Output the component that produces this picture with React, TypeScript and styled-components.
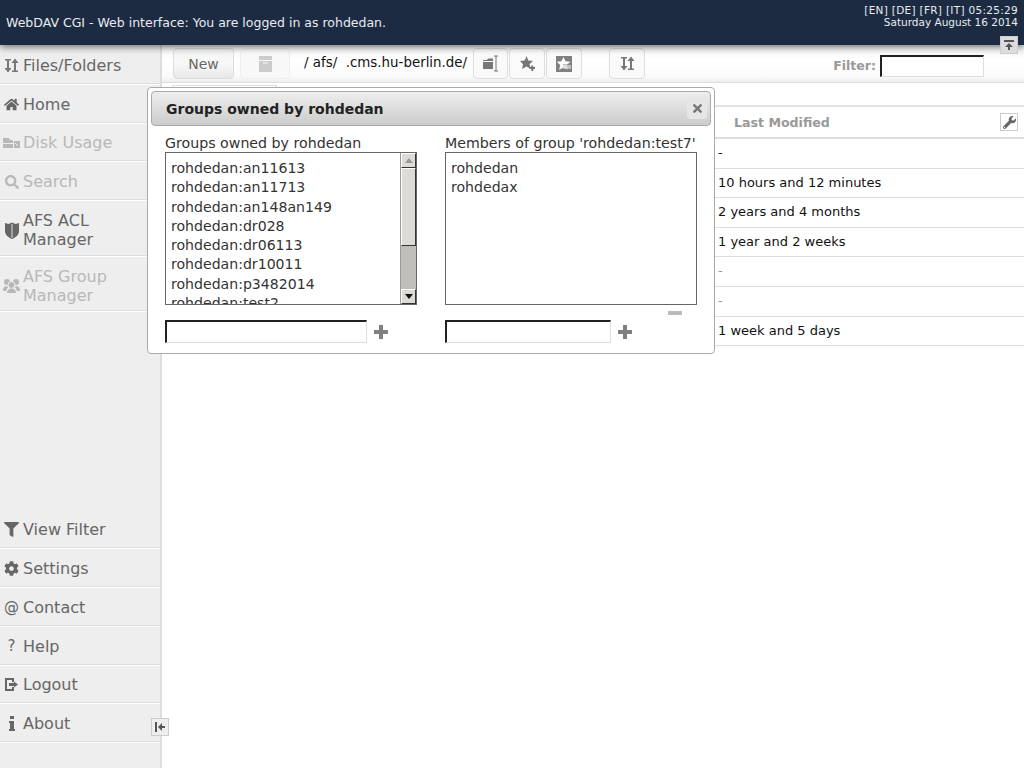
import styled, { createGlobalStyle } from "styled-components";
import { ReactNode } from "react";
import { FaCog, FaFilter, FaHome, FaSearch, FaTimes, FaWrench } from "react-icons/fa";

const GlobalStyle = createGlobalStyle`
  html, body {
    margin: 0;
    height: 100%;
    overflow: hidden;
    background: #fff;
    font-family: "DejaVu Sans", Verdana, sans-serif;
  }
`;

const Page = styled.div`
  position: relative;
  width: 1024px;
  height: 768px;
  display: flex;
  flex-direction: column;
  overflow: hidden;
`;

const TopBar = styled.header`
  position: relative;
  z-index: 2;
  height: 45px;
  flex: none;
  display: flex;
  justify-content: space-between;
  padding: 4px 6px 0;
  box-sizing: border-box;
  background: #1c2b42;
  box-shadow: 0 2px 7px rgba(0, 0, 0, 0.55);
  color: #e8ecf0;
`;

const Title = styled.div`
  font-size: 12.5px;
  line-height: 16px;
  padding-top: 11px;
`;

const Clock = styled.div`
  font-size: 10.5px;
  line-height: 12px;
  text-align: right;
`;

const ClockLine = styled.div<{ $wide?: boolean }>`
  letter-spacing: ${(p) => (p.$wide ? "0.3px" : "0")};
`;

const PinButton = styled.button`
  position: absolute;
  right: 6px;
  top: 36px;
  width: 18px;
  height: 18px;
  padding: 0;
  display: flex;
  align-items: center;
  justify-content: center;
  border: 1px solid #ccc;
  background: #ddd;
`;

const Body = styled.div`
  flex: 1;
  min-height: 0;
  display: flex;
`;

const Sidebar = styled.nav`
  width: 162px;
  flex: none;
  display: flex;
  flex-direction: column;
  justify-content: space-between;
  padding-bottom: 26px;
  box-sizing: border-box;
  background: #eee;
  border-right: 2px solid #ddd;
`;

const NavGroup = styled.div`
  display: flex;
  flex-direction: column;
`;

const NavItem = styled.div<{ $disabled?: boolean; $tall?: boolean }>`
  height: ${(p) => (p.$tall ? "55.5px" : "38.75px")};
  box-sizing: border-box;
  padding-top: ${(p) => (p.$tall ? "6px" : "3px")};
  display: flex;
  align-items: center;
  border-bottom: 1px solid #ddd;
  box-shadow: 0 1px 0 #fff;
  color: ${(p) => (p.$disabled ? "#b8b8b8" : "#666")};
  font-size: 16px;
  line-height: 19px;
`;

const NavIcon = styled.span<{ $disabled?: boolean }>`
  width: 23px;
  flex: none;
  display: flex;
  justify-content: center;
  color: ${(p) => (p.$disabled ? "#b8b8b8" : "#666")};
`;

const GlyphIcon = styled.span`
  font-size: 15px;
  line-height: 16px;
`;

const Main = styled.main`
  flex: 1;
  min-width: 0;
  display: flex;
  flex-direction: column;
`;

const Toolbar = styled.div`
  height: 38px;
  flex: none;
  box-sizing: border-box;
  display: flex;
  align-items: flex-start;
  padding: 3px 0 0 10px;
  background: linear-gradient(#f4f4f4, #fff 40%, #fafafa 85%, #eee);
  border-bottom: 1px solid #ddd;
`;

const ToolButton = styled.button<{ $w: number; $disabled?: boolean; $ml?: number }>`
  width: ${(p) => p.$w}px;
  height: 31px;
  margin-left: ${(p) => p.$ml ?? 1}px;
  padding: 0;
  flex: none;
  display: flex;
  align-items: center;
  justify-content: center;
  border: 1px solid ${(p) => (p.$disabled ? "#eee" : "#ddd")};
  border-radius: 4px;
  background: ${(p) => (p.$disabled ? "#f8f8f8" : "linear-gradient(#f4f4f4, #f8f8f8 50%, #e8e8e8)")};
  color: #666;
  font: 14px "DejaVu Sans", sans-serif;
`;

const IconButton = styled(ToolButton)`
  background: #fafafa;
`;

const Crumbs = styled.div`
  width: 168px;
  margin-left: 14px;
  flex: none;
  color: #111;
  font-size: 13.4px;
  line-height: 30px;
  white-space: pre;
`;

const FilterLabel = styled.label`
  margin-left: auto;
  color: #999;
  font-size: 12.5px;
  font-weight: bold;
  line-height: 36px;
`;

const TextField = styled.input<{ $w: number }>`
  width: ${(p) => p.$w}px;
  box-sizing: border-box;
  background: #fff;
  border-style: solid;
  border-width: 2px 1px 1px 2px;
  border-color: #222 #ddd #ddd #222;
  outline: none;
`;

const FilterField = styled(TextField)`
  height: 22px;
  margin: 7px 40px 0 4px;
`;

const PageInfo = styled.div`
  width: 105px;
  height: 20px;
  margin: 2px 0 0 10px;
  box-sizing: border-box;
  border: 1px solid #ddd;
  border-bottom: 0;
`;

const Listing = styled.div`
  border-top: 2px solid #e4e4e4;
`;

const HeaderRow = styled.div`
  height: 30px;
  display: flex;
  align-items: center;
  justify-content: space-between;
  padding: 0 6px 0 572px;
  border-bottom: 2px solid #ddd;
  color: #999;
  font-size: 12.6px;
  font-weight: bold;
`;

const SettingsButton = styled.button`
  width: 18px;
  height: 18px;
  padding: 0;
  display: flex;
  align-items: center;
  justify-content: center;
  border: 1px solid #ccc;
  background: #fff;
  color: #666;
`;

const Row = styled.div<{ $muted?: boolean }>`
  height: 29.6px;
  box-sizing: border-box;
  padding-left: 556px;
  border-bottom: 1px solid #ddd;
  color: ${(p) => (p.$muted ? "#999" : "#111")};
  font-size: 13px;
  line-height: 28px;
`;

const CollapseButton = styled.button`
  position: absolute;
  left: 151px;
  top: 718px;
  width: 18px;
  height: 18px;
  padding: 0;
  display: flex;
  align-items: center;
  justify-content: center;
  border: 1px solid #ccc;
  background: #eee;
`;

const Dialog = styled.section`
  position: absolute;
  z-index: 3;
  left: 147px;
  top: 87px;
  width: 568px;
  height: 267px;
  box-sizing: border-box;
  padding: 3px;
  background: #fff;
  border: 1px solid #aaa;
  border-radius: 4px;
`;

const DialogTitle = styled.div`
  height: 35px;
  box-sizing: border-box;
  display: flex;
  align-items: center;
  justify-content: space-between;
  padding: 0 3px 0 14px;
  background: linear-gradient(#eee, #ccc);
  border: 1px solid #aaa;
  border-radius: 4px;
  color: #222;
  font-size: 14px;
  font-weight: bold;
`;

const CloseButton = styled.button`
  width: 20px;
  height: 20px;
  padding: 0;
  display: flex;
  align-items: center;
  justify-content: center;
  border: 0;
  border-radius: 3px;
  background: #e6e6e6;
  color: #777;
`;

const Columns = styled.div`
  display: flex;
  gap: 28px;
  padding: 7px 0 0 14px;
`;

const Column = styled.div`
  width: 252px;
`;

const ColumnLabel = styled.div`
  color: #333;
  font-size: 14.2px;
  line-height: 19px;
  padding-top: 1px;
  height: 18px;
  white-space: nowrap;
`;

const ListBox = styled.div`
  height: 153px;
  box-sizing: border-box;
  display: flex;
  overflow: hidden;
  border: 1px solid #666;
`;

const ListItems = styled.ul`
  flex: 1;
  margin: 0;
  padding: 6px 5px 0;
  list-style: none;
  color: #333;
  font-size: 14.1px;
  line-height: 19.25px;
`;

const ScrollTrack = styled.div`
  width: 15px;
  flex: none;
  display: flex;
  flex-direction: column;
  background: #bfbeb8;
  border-left: 1px solid #999;
`;

const ScrollButton = styled.div`
  height: 15px;
  flex: none;
  display: flex;
  align-items: center;
  justify-content: center;
  box-sizing: border-box;
  background: #dcdbd6;
  border: 1px solid;
  border-color: #fff #333 #333 #fff;
`;

const ScrollThumb = styled.div`
  height: 78px;
  flex: none;
  box-sizing: border-box;
  background: #dcdbd6;
  border: 1px solid;
  border-color: #fff #333 #333 #fff;
`;

const ScrollSpacer = styled.div`
  flex: 1;
`;

const Arrow = styled.span<{ $up?: boolean }>`
  width: 0;
  height: 0;
  border-left: 4px solid transparent;
  border-right: 4px solid transparent;
  ${(p) => (p.$up ? "border-bottom: 5px solid #999;" : "border-top: 5px solid #111;")}
`;

const RemoveRow = styled.div`
  height: 15px;
  box-sizing: border-box;
  padding: 6px 15px 0 0;
  display: flex;
  justify-content: flex-end;
  align-items: flex-start;
`;

const AddRow = styled.div`
  display: flex;
  align-items: center;
  gap: 7px;
`;

const AddField = styled(TextField)`
  height: 23px;
`;

function SortIcon() {
  return (
    <svg width="15" height="15" viewBox="0 0 15 15" fill="#777">
      <path d="M1 1h6v1.500H5V10h2.500L4 14.500.500 10H3V2.500H1z" />
      <path d="M11 .500L14.500 5H12v7.500h2V14H8v-1.500h2V5H7.500z" />
    </svg>
  );
}

function DiskIcon() {
  return (
    <svg width="17" height="12" viewBox="0 0 17 12" fill="#b8b8b8">
      <path d="M0 1h6l1 2h3v3H0zM0 7h10v4H0z" />
      <path d="M11 4h6v7h-6z" />
      <path d="M12 6l3 3" stroke="#eee" />
    </svg>
  );
}

function ShieldIcon() {
  return (
    <svg width="14" height="17" viewBox="0 0 14 17">
      <path d="M0 1l3.500 1L7 .500 10.500 2 14 1v8c0 4-3.500 6.500-7 8-3.500-1.500-7-4-7-8z" fill="#666" />
      <path d="M7 2v14" stroke="#ddd" />
    </svg>
  );
}

function GroupIcon() {
  return (
    <svg width="17" height="15" viewBox="0 0 17 15" fill="#b8b8b8">
      <circle cx="4" cy="4" r="3" />
      <circle cx="13" cy="4" r="3" />
      <circle cx="8.500" cy="7" r="3.500" stroke="#eee" />
      <path d="M0 12c0-3 2-4 4-4l1 1-2 4H0zM17 12c0-3-2-4-4-4l-1 1 2 4h3zM4 15c0-3 2-4.500 4.500-4.500S13 12 13 15z" />
    </svg>
  );
}

function LogoutIcon() {
  return (
    <svg width="13" height="13" viewBox="0 0 13 13" fill="#666">
      <path d="M0 0h9v4H7V2H2v9h5V9h2v4H0z" />
      <path d="M9 3.500L13 6.500 9 9.500V8H4V5h5z" />
    </svg>
  );
}

function InfoIcon() {
  return (
    <svg width="6" height="15" viewBox="0 0 6 15" fill="#666">
      <path d="M1 0h4v3H1zM0 5h5v8h1v2H0v-2h1V7H0z" />
    </svg>
  );
}

function RenameIcon() {
  return (
    <svg width="16" height="17" viewBox="0 0 16 17">
      <path d="M0 5h4l1-1.500h5V14H0z" fill="#777" />
      <path d="M0 6.500h10" stroke="#fafafa" />
      <path d="M11 1h4M13 1v15M11 16h4" stroke="#777" fill="none" />
    </svg>
  );
}

function StarPlusIcon() {
  return (
    <svg width="15" height="15" viewBox="0 0 15 15" fill="#777">
      <path d="M6.500 0l1.800 4.600 4.700.400-3.500 3.200L11 13 6.500 10.500 2 13l1.100-4.800L0 5l4.700-.400z" />
      <path d="M9.500 12h5.500M12.250 9.500V15" stroke="#777" strokeWidth="2" />
    </svg>
  );
}

function BookmarkListIcon() {
  return (
    <svg width="16" height="16" viewBox="0 0 16 16">
      <path d="M0 0h16v16H0z" fill="#808080" />
      <path d="M7.500 1l2 4.200 4.800.500L10.800 9l1 4.800-4.300-2.400-4.300 2.400 1-4.800L.700 5.700l4.800-.500z" fill="#fff" />
      <path d="M7 9h8M7 11h8M7 13h8" stroke="#808080" />
      <path d="M7 9.900h8M7 11.900h8" stroke="#fff" />
    </svg>
  );
}

function PlusIcon() {
  return (
    <svg width="14" height="14" viewBox="0 0 14 14" fill="#808080">
      <path d="M5 0h4v5h5v4H9v5H5V9H0V5h5z" />
    </svg>
  );
}

function MinusIcon() {
  return (
    <svg width="14" height="4" viewBox="0 0 14 4" fill="#bbb">
      <path d="M0 0h14v4H0z" />
    </svg>
  );
}

const topItems: { label: ReactNode; icon: ReactNode; disabled?: boolean; tall?: boolean }[] = [
  { label: "Files/Folders", icon: <SortIcon /> },
  { label: "Home", icon: <FaHome size={15} /> },
  { label: "Disk Usage", icon: <DiskIcon />, disabled: true },
  { label: "Search", icon: <FaSearch size={14} />, disabled: true },
  { label: "AFS ACL Manager", icon: <ShieldIcon />, tall: true },
  { label: "AFS Group Manager", icon: <GroupIcon />, disabled: true, tall: true },
];

const bottomItems: { label: string; icon: ReactNode }[] = [
  { label: "View Filter", icon: <FaFilter size={15} /> },
  { label: "Settings", icon: <FaCog size={15} /> },
  { label: "Contact", icon: <GlyphIcon>@</GlyphIcon> },
  { label: "Help", icon: <GlyphIcon>?</GlyphIcon> },
  { label: "Logout", icon: <LogoutIcon /> },
  { label: "About", icon: <InfoIcon /> },
];

const modified: { text: string; muted?: boolean }[] = [
  { text: "-" },
  { text: "10 hours and 12 minutes" },
  { text: "2 years and 4 months" },
  { text: "1 year and 2 weeks" },
  { text: "-", muted: true },
  { text: "-", muted: true },
  { text: "1 week and 5 days" },
];

const groups = [
  "rohdedan:an11613",
  "rohdedan:an11713",
  "rohdedan:an148an149",
  "rohdedan:dr028",
  "rohdedan:dr06113",
  "rohdedan:dr10011",
  "rohdedan:p3482014",
  "rohdedan:test2",
  "rohdedan:test7",
];

export default function App() {
  return (
    <Page>
      <GlobalStyle />
      <TopBar>
        <Title>WebDAV CGI - Web interface: You are logged in as rohdedan.</Title>
        <Clock>
          <ClockLine $wide>[EN] [DE] [FR] [IT] 05:25:29</ClockLine>
          <ClockLine>Saturday August 16 2014</ClockLine>
        </Clock>
        <PinButton>
          <svg width="10" height="10" viewBox="0 0 10 10" fill="#555">
            <path d="M0 0h10v2H0zM5 3l4 4H6v3H4V7H1z" />
          </svg>
        </PinButton>
      </TopBar>
      <Body>
        <Sidebar>
          <NavGroup>
            {topItems.map((item, i) => (
              <NavItem key={i} $disabled={item.disabled} $tall={item.tall}>
                <NavIcon $disabled={item.disabled}>{item.icon}</NavIcon>
                <span>{item.label}</span>
              </NavItem>
            ))}
          </NavGroup>
          <NavGroup>
            {bottomItems.map((item, i) => (
              <NavItem key={i}>
                <NavIcon>{item.icon}</NavIcon>
                <span>{item.label}</span>
              </NavItem>
            ))}
          </NavGroup>
        </Sidebar>
        <Main>
          <Toolbar>
            <ToolButton $w={61}>New</ToolButton>
            <ToolButton $w={50} $ml={6} $disabled>
              <svg width="13" height="16" viewBox="0 0 13 16" fill="#ccc">
                <path d="M0 0h13v4H0zM0 5h13v11H0z" />
                <path d="M4 7h5" stroke="#f8f8f8" />
              </svg>
            </ToolButton>
            <Crumbs>{"/ afs/  .cms.hu-berlin.de/"}</Crumbs>
            <IconButton $w={35}>
              <RenameIcon />
            </IconButton>
            <IconButton $w={36}>
              <StarPlusIcon />
            </IconButton>
            <IconButton $w={36}>
              <BookmarkListIcon />
            </IconButton>
            <IconButton $w={36} $ml={27}>
              <SortIcon />
            </IconButton>
            <FilterLabel htmlFor="filter">Filter:</FilterLabel>
            <FilterField id="filter" $w={104} />
          </Toolbar>
          <PageInfo />
          <Listing>
            <HeaderRow>
              <span>Last Modified</span>
              <SettingsButton>
                <FaWrench size={13} />
              </SettingsButton>
            </HeaderRow>
            {modified.map((row, i) => (
              <Row key={i} $muted={row.muted}>
                {row.text}
              </Row>
            ))}
          </Listing>
        </Main>
      </Body>
      <CollapseButton>
        <svg width="10" height="10" viewBox="0 0 10 10" fill="#555">
          <path d="M0 0h2v10H0zM3 5l4-4v3h3v2H7v3z" />
        </svg>
      </CollapseButton>
      <Dialog>
        <DialogTitle>
          Groups owned by rohdedan
          <CloseButton>
            <FaTimes size={13} />
          </CloseButton>
        </DialogTitle>
        <Columns>
          <Column>
            <ColumnLabel>Groups owned by rohdedan</ColumnLabel>
            <ListBox>
              <ListItems>
                {groups.map((g) => (
                  <li key={g}>{g}</li>
                ))}
              </ListItems>
              <ScrollTrack>
                <ScrollButton>
                  <Arrow $up />
                </ScrollButton>
                <ScrollThumb />
                <ScrollSpacer />
                <ScrollButton>
                  <Arrow />
                </ScrollButton>
              </ScrollTrack>
            </ListBox>
            <RemoveRow />
            <AddRow>
              <AddField $w={202} />
              <PlusIcon />
            </AddRow>
          </Column>
          <Column>
            <ColumnLabel>Members of group 'rohdedan:test7'</ColumnLabel>
            <ListBox>
              <ListItems>
                <li>rohdedan</li>
                <li>rohdedax</li>
              </ListItems>
            </ListBox>
            <RemoveRow>
              <MinusIcon />
            </RemoveRow>
            <AddRow>
              <AddField $w={166} />
              <PlusIcon />
            </AddRow>
          </Column>
        </Columns>
      </Dialog>
    </Page>
  );
}
